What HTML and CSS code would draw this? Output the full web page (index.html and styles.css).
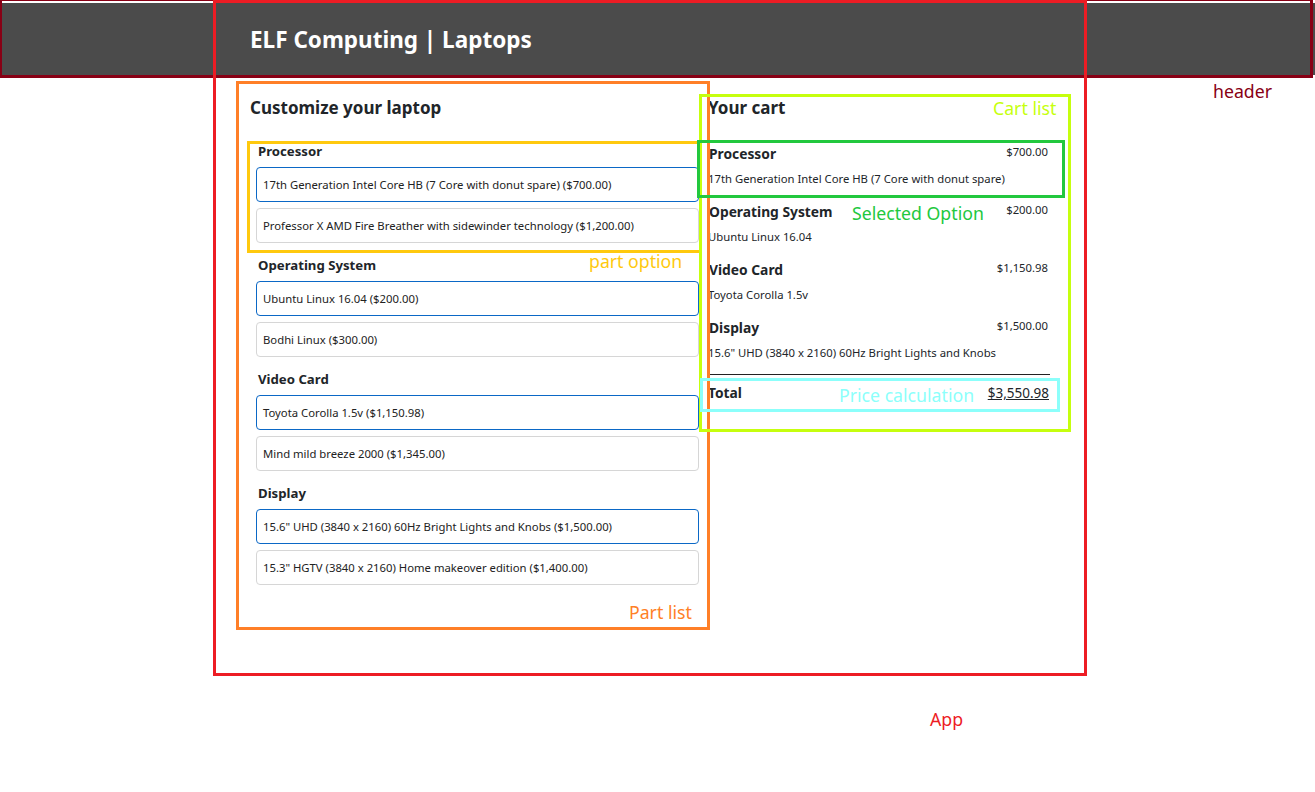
FILE: index.html
```html
<!DOCTYPE html>
<html lang="en">
<head>
<meta charset="utf-8">
<title>ELF Computing | Laptops</title>
<link rel="stylesheet" href="styles.css">
</head>
<body>
<header class="site-header">
  <h1 class="site-title">ELF Computing | Laptops</h1>
</header>
<main class="app">
  <section class="parts">
    <h2 class="col-title">Customize your laptop</h2>
    <div class="part">
      <h3 class="part-title">Processor</h3>
      <div class="option selected">17th Generation Intel Core HB (7 Core with donut spare) ($700.00)</div>
      <div class="option">Professor X AMD Fire Breather with sidewinder technology ($1,200.00)</div>
    </div>
    <div class="part">
      <h3 class="part-title">Operating System</h3>
      <div class="option selected">Ubuntu Linux 16.04 ($200.00)</div>
      <div class="option">Bodhi Linux ($300.00)</div>
    </div>
    <div class="part">
      <h3 class="part-title">Video Card</h3>
      <div class="option selected">Toyota Corolla 1.5v ($1,150.98)</div>
      <div class="option">Mind mild breeze 2000 ($1,345.00)</div>
    </div>
    <div class="part">
      <h3 class="part-title">Display</h3>
      <div class="option selected">15.6" UHD (3840 x 2160) 60Hz Bright Lights and Knobs ($1,500.00)</div>
      <div class="option">15.3" HGTV (3840 x 2160) Home makeover edition ($1,400.00)</div>
    </div>
  </section>
  <section class="cart">
    <h2 class="col-title">Your cart</h2>
    <div class="cart-items">
      <div class="cart-item">
        <div class="cart-row"><span class="cart-name">Processor</span><span class="cart-price">$700.00</span></div>
        <div class="cart-desc">17th Generation Intel Core HB (7 Core with donut spare)</div>
      </div>
      <div class="cart-item">
        <div class="cart-row"><span class="cart-name">Operating System</span><span class="cart-price">$200.00</span></div>
        <div class="cart-desc">Ubuntu Linux 16.04</div>
      </div>
      <div class="cart-item">
        <div class="cart-row"><span class="cart-name">Video Card</span><span class="cart-price">$1,150.98</span></div>
        <div class="cart-desc">Toyota Corolla 1.5v</div>
      </div>
      <div class="cart-item">
        <div class="cart-row"><span class="cart-name">Display</span><span class="cart-price">$1,500.00</span></div>
        <div class="cart-desc">15.6" UHD (3840 x 2160) 60Hz Bright Lights and Knobs</div>
      </div>
    </div>
    <div class="cart-divider"></div>
    <div class="total-row"><span class="total-label">Total</span><span class="total-price">$3,550.98</span></div>
  </section>
</main>

<div class="annotations">
  <div class="box box-header"></div>
  <div class="box box-app"></div>
  <div class="box box-partlist"></div>
  <div class="box box-partoption"></div>
  <div class="box box-cartlist"></div>
  <div class="box box-selected"></div>
  <div class="box box-price"></div>
  <span class="label label-header">header</span>
  <span class="label label-cartlist">Cart list</span>
  <span class="label label-selected">Selected Option</span>
  <span class="label label-partoption">part option</span>
  <span class="label label-price">Price calculation</span>
  <span class="label label-partlist">Part list</span>
  <span class="label label-app">App</span>
</div>
</body>
</html>
```

FILE: styles.css
```css
* { box-sizing: border-box; }

body {
  margin: 0;
  position: relative;
  min-height: 792px;
  background: #ffffff;
  color: #212529;
  font-family: "Noto Sans", "Open Sans", sans-serif;
}

.site-header {
  margin-top: 3px;
  height: 72px;
  background: #4b4b4b;
  display: flex;
  align-items: center;
  padding-left: 250px;
}

.site-title {
  margin: 0;
  color: #ffffff;
  font-size: 22.5px;
  font-weight: 700;
  line-height: 28px;
  padding-top: 1px;
}

.app {
  display: flex;
  gap: 8px;
  padding-left: 250px;
  padding-top: 21px;
}

.parts { width: 450px; }
.cart { width: 342px; }

.col-title {
  margin: 0;
  font-size: 17px;
  font-weight: 700;
  line-height: 24px;
}

.part { margin-top: 13px; }
.parts .col-title + .part { margin-top: 22px; }

.part-title {
  margin: 0 0 7px 0;
  padding-left: 8px;
  font-size: 13.2px;
  font-weight: 700;
  line-height: 18px;
}

.option {
  margin-left: 6px;
  width: 443px;
  height: 35px;
  border: 1px solid #d6d6d6;
  border-radius: 4px;
  padding: 0 6px;
  display: flex;
  align-items: center;
  font-size: 11.3px;
  color: #222;
  white-space: nowrap;
}
.option + .option { margin-top: 6px; }
.option.selected { border-color: #0b68c6; }

.cart-items {
  margin-top: 24px;
  display: flex;
  flex-direction: column;
  gap: 15px;
}

.cart-row {
  display: flex;
  justify-content: space-between;
  align-items: flex-start;
  padding: 0 2px 0 1px;
}

.cart-name {
  font-size: 13.8px;
  font-weight: 700;
  line-height: 20px;
}

.cart-price {
  font-size: 11.3px;
  line-height: 16px;
}

.cart-desc {
  margin-top: 7px;
  font-size: 11.3px;
  line-height: 16px;
}

.cart-divider {
  margin-top: 13px;
  height: 1px;
  background: #222;
}

.total-row {
  margin-top: 9px;
  display: flex;
  justify-content: space-between;
  align-items: center;
  line-height: 18px;
  padding-right: 1px;
}

.total-label { font-size: 13.8px; font-weight: 700; }
.total-price { font-size: 13.5px; text-decoration: underline; }

/* annotation overlay */
.annotations {
  position: absolute;
  inset: 0;
  pointer-events: none;
}

.box {
  position: absolute;
  border: 3px solid;
}
.box-header { left: 0; top: 0; width: 1313px; height: 78px; border-color: #880015; border-width: 1px 3px 3px 2px; }
.box-app { left: 213px; top: 0; width: 874px; height: 676px; border-color: #ed1c24; }
.box-partlist { left: 236px; top: 81px; width: 474px; height: 549px; border-color: #ff7f27; }
.box-partoption { left: 247px; top: 141px; width: 455px; height: 112px; border-color: #ffc90e; }
.box-cartlist { left: 699px; top: 94px; width: 372px; height: 338px; border-color: #c6ff0e; }
.box-selected { left: 697px; top: 140px; width: 368px; height: 58px; border-color: #22c83e; }
.box-price { left: 700px; top: 378px; width: 360px; height: 34px; border-color: #8cfffb; }

.label {
  position: absolute;
  font-size: 17.7px;
  line-height: 24px;
  white-space: nowrap;
}
.label-header { left: 1213px; top: 79px; color: #880015; }
.label-cartlist { left: 993px; top: 96px; color: #c6ff0e; }
.label-selected { left: 852px; top: 201px; color: #22c83e; }
.label-partoption { left: 589px; top: 249px; color: #ffc90e; }
.label-price { left: 839px; top: 383px; color: #8cfffb; }
.label-partlist { left: 629px; top: 600px; color: #ff7f27; }
.label-app { left: 930px; top: 707px; color: #ed1c24; }
```
